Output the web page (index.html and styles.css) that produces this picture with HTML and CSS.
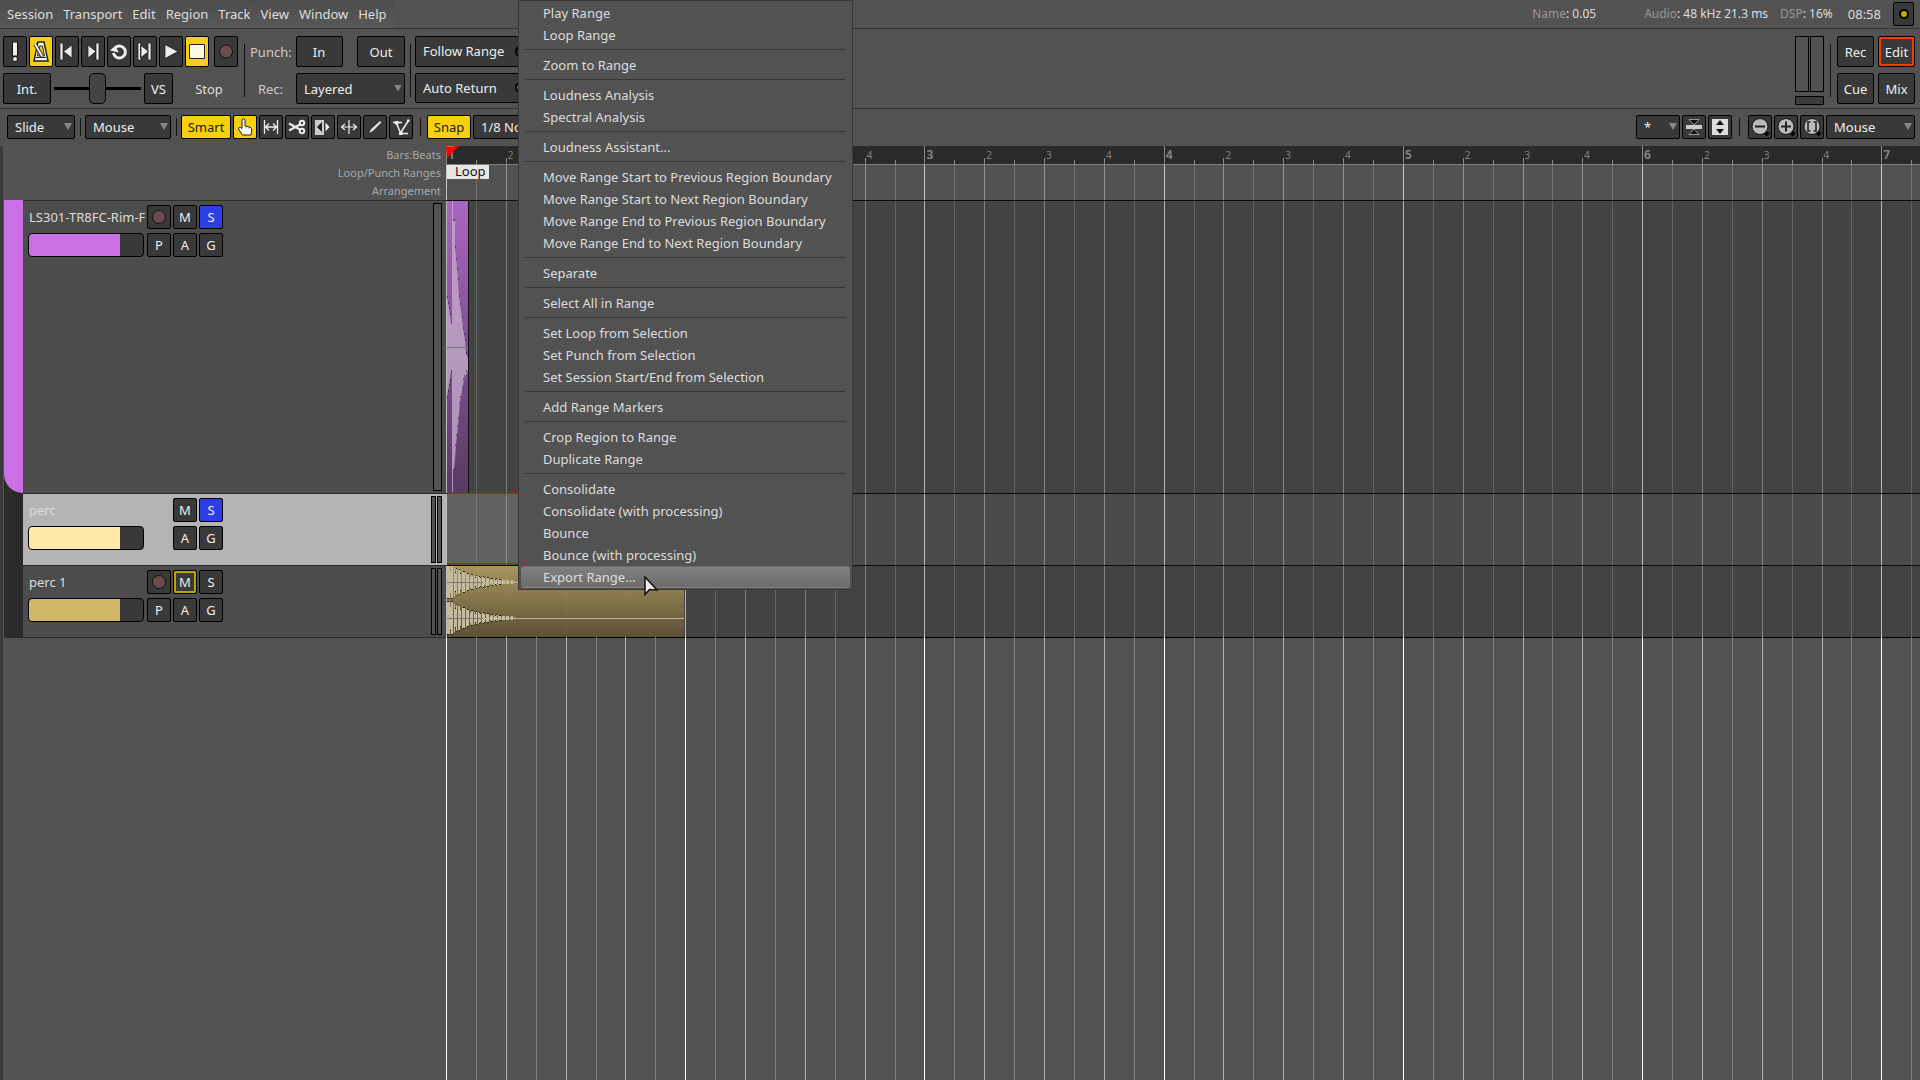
FILE: index.html
```html
<!DOCTYPE html>
<html lang="en">
<head>
  <meta charset="UTF-8" />
  <meta name="viewport" content="width=device-width, initial-scale=1.0"/>
  <title>Editor</title>
  <link rel="stylesheet" href="styles.css">
</head>
<body>
  <header class="menubar">
    <nav>
      <a href="#">Session</a>
      <a href="#">Transport</a>
      <a href="#">Edit</a>
      <a href="#">Region</a>
      <a href="#">Track</a>
      <a href="#">View</a>
      <a href="#">Window</a>
      <a href="#">Help</a>
    </nav>
    <div class="status">
      <span class="st-name"><i>Name</i>: 0.05</span>
      <span class="st-audio"><i>Audio</i>: 48 kHz 21.3 ms</span>
      <span class="st-dsp"><i>DSP</i>: 16%</span>
      <span class="st-time">08:58</span>
      <button class="btn log" aria-label="Log"><span></span></button>
    </div>
  </header>

  <!-- Transport -->
  <section class="transport">
    <div class="rows">
      <div class="row">
        <button class="btn icon" aria-label="Panic"><svg width="22" height="29"><path d="M8.500 5h5v14h-5z" fill="#eee" stroke="#111"/><circle cx="11" cy="22" r="2.500" fill="#eee" stroke="#111"/></svg></button>
        <button class="btn icon on" aria-label="Metronome"><svg width="22" height="29"><path d="M8 5h6l4 19H4z" fill="#fff" stroke="#222" stroke-width="1.500"/><path d="M9.500 9h3l2 10h-7z" fill="#f5d00f" stroke="#222"/><path d="M5 7l7 12" stroke="#222" stroke-width="3.500"/><path d="M5 7l7 12" stroke="#fff" stroke-width="1.800"/><path d="M6 20.500h10" stroke="#222"/></svg></button>
        <button class="btn icon" aria-label="Go to start"><svg width="22" height="29"><path d="M4 6h3v17H4z M16 8v13l-8.500-6.500z" fill="#eee" stroke="#111" stroke-width=".7"/></svg></button>
        <button class="btn icon" aria-label="Go to end"><svg width="22" height="29"><path d="M14 6h3v17h-3z M6 8v13l8-6.500z" fill="#eee" stroke="#111" stroke-width=".7"/></svg></button>
        <button class="btn icon" aria-label="Loop"><svg width="22" height="29"><path d="M7.500 10.500A6 6 0 1 1 5.500 16" fill="none" stroke="#eee" stroke-width="3"/><path d="M2 13.500l5-4.500 4 6.500z" fill="#eee"/></svg></button>
        <button class="btn icon" aria-label="Play selection"><svg width="22" height="29"><path d="M4 6h3v17H4zM14 6h3v17h-3z M6.500 8v13l8-6.500z" fill="#eee" stroke="#111" stroke-width=".7"/></svg></button>
        <button class="btn icon" aria-label="Play"><svg width="22" height="29"><path d="M5 7.500v14l13-7z" fill="#eee" stroke="#111" stroke-width=".7"/></svg></button>
        <button class="btn icon on" aria-label="Stop"><svg width="22" height="29"><path d="M3.500 7.500h15v14h-15z" fill="#fdf9e0" stroke="#222"/></svg></button>
        <button class="btn icon rec-main" aria-label="Record"><svg width="22" height="29"><circle cx="11" cy="14.500" r="6.500" fill="#6a4c4e" stroke="#111"/></svg></button>
      </div>
      <div class="row">
        <button class="btn int">Int.</button>
        <input class="shuttle" type="range" aria-label="Shuttle speed" min="0" max="100" value="50">
        <button class="btn vs">VS</button>
        <span class="state">Stop</span>
      </div>
    </div>
    <div class="vsep"></div>
    <div class="rows punch">
      <div class="row"><span class="lbl">Punch:</span><button class="btn in">In</button><button class="btn out">Out</button></div>
      <div class="row"><label class="lbl" for="recmode">Rec:</label><span class="combo layered"><select id="recmode"><option>Layered</option></select></span></div>
    </div>
    <div class="vsep"></div>
    <div class="rows follow">
      <button class="btn led">Follow Range<span></span></button>
      <button class="btn led lit">Auto Return<span></span></button>
    </div>
    <div class="meters">
      <div class="pair"><span></span><span></span></div>
      <span class="peak"></span>
    </div>
    <div class="vsep"></div>
    <div class="rows pages">
      <div class="row"><button class="btn">Rec</button><button class="btn current">Edit</button></div>
      <div class="row"><button class="btn">Cue</button><button class="btn">Mix</button></div>
    </div>
  </section>

  <!-- Edit tools -->
  <section class="tools">
    <span class="combo slide"><select aria-label="Edit mode"><option>Slide</option></select></span>
    <div class="vsep"></div>
    <span class="combo mouse"><select aria-label="Edit point"><option>Mouse</option></select></span>
    <div class="vsep"></div>
    <div class="group">
      <button class="btn smart on">Smart</button>
      <button class="btn icon on" aria-label="Grab"><svg width="22" height="22"><path d="M8 3.500q1.500-1.500 3 0V10l5 1.200q2 .6 1.700 3L17 19H8.500L4.500 13q0-2 2-1.500l1.500 1z" fill="#fff" stroke="#222"/><path d="M12 10.500v2M14.500 11v2" stroke="#888" stroke-width=".7"/></svg></button>
      <button class="btn icon" aria-label="Range"><svg width="22" height="22" fill="none" stroke="#eee" stroke-width="1.300"><path d="M4.500 4v14M17.500 4v14M5 11h12M9 7.500L5.500 11 9 14.500M13 7.500l3.500 3.500-3.500 3.500"/></svg></button>
      <button class="btn icon" aria-label="Cut"><svg width="22" height="22" fill="none" stroke="#eee" stroke-width="2"><path d="M3 7.500l11 6M3 14.500l11-6"/><circle cx="16" cy="7" r="2.200"/><circle cx="16" cy="15" r="2.200"/></svg></button>
      <button class="btn icon" aria-label="Audition"><svg width="22" height="22"><path d="M3 4h9v15H3z" fill="#ccc"/><path d="M5 11l5-5v10z" fill="#222"/><path d="M13.500 6.500l4 4.500-4 4.500z" fill="#eee"/></svg></button>
      <button class="btn icon" aria-label="Stretch"><svg width="22" height="22" fill="none" stroke="#eee" stroke-width="1.200"><path d="M11 4v14M3.500 11h15M7 8l-3.500 3L7 14M15 8l3.500 3-3.500 3"/></svg></button>
      <button class="btn icon" aria-label="Draw"><svg width="22" height="22"><path d="M4 18l2.500-5L16 4.500 18.500 6 9 15.500z" fill="#ddd" stroke="#111" stroke-width=".8"/></svg></button>
      <button class="btn icon" aria-label="Edit contents"><svg width="22" height="22" fill="none" stroke="#eee" stroke-width="1.500"><path d="M3 6.500h9M6.500 7l4 10 8-12.500M11 17.500h7"/><path d="M5 5h3.500v3.500H5zM9 15.500h3.500V19H9zM17 3.500h2.500V6H17z" fill="#eee" stroke="none"/></svg></button>
    </div>
    <div class="vsep"></div>
    <div class="group">
      <button class="btn snap on">Snap</button>
      <span class="combo note"><select aria-label="Grid"><option>1/8 Note</option></select></span>
    </div>
    <div class="group right">
      <span class="combo star"><select aria-label="Visible tracks"><option>*</option></select></span>
      <button class="btn icon" aria-label="Shrink tracks"><svg width="22" height="22"><path d="M3 9h16v4H3z" fill="#ccc"/><path d="M6 3.500h10L11 9zM6 18.500h10L11 13z" fill="#111" stroke="#bbb" stroke-width=".8"/></svg></button>
      <button class="btn icon" aria-label="Expand tracks"><svg width="22" height="22"><path d="M3 3h16v16H3z" fill="#ddd"/><path d="M11 4l4 5H7zM11 18l4-5H7z" fill="#111"/></svg></button>
    </div>
    <div class="vsep"></div>
    <div class="group">
      <button class="btn icon" aria-label="Zoom out"><svg width="22" height="22"><path d="M15 15l4 4" stroke="#000" stroke-width="4"/><circle cx="11" cy="10.500" r="8" fill="#bbb" stroke="#111"/><path d="M6 10.500h10" stroke="#222" stroke-width="2"/></svg></button>
      <button class="btn icon" aria-label="Zoom in"><svg width="22" height="22"><path d="M15 15l4 4" stroke="#000" stroke-width="4"/><circle cx="11" cy="10.500" r="8" fill="#bbb" stroke="#111"/><path d="M6 10.500h10M11 5.500v10" stroke="#222" stroke-width="2"/></svg></button>
      <button class="btn icon" aria-label="Zoom to session"><svg width="22" height="22"><path d="M15 15l4 4" stroke="#000" stroke-width="4"/><circle cx="11" cy="10.500" r="8" fill="#bbb" stroke="#111"/><path d="M9.500 6h-2.500v9h2.500M12.500 6h2.500v9h-2.500" fill="none" stroke="#222" stroke-width="1.600"/></svg></button>
      <span class="combo focus"><select aria-label="Zoom focus"><option>Mouse</option></select></span>
    </div>
  </section>

  <main class="editor">
    <div class="side">
      <div class="ruler-names"><span>Bars:Beats</span><span>Loop/Punch Ranges</span><span>Arrangement</span></div>
      <div class="lanes">
        <div class="groups"><span></span></div>
        <div class="heads">
          <div class="head tall">
            <div class="controls">
              <span class="name">LS301-TR8FC-Rim-F</span>
              <button class="btn icon" aria-label="Record"><svg width="22" height="22"><circle cx="11" cy="11" r="6.500" fill="#6a4c4e" stroke="#111"/></svg></button>
              <button class="btn">M</button><button class="btn solo">S</button>
              <input class="fader purple" type="range" aria-label="Gain" value="79">
              <button class="btn">P</button><button class="btn">A</button><button class="btn">G</button>
            </div>
            <div class="vu"><span class="wide"></span></div>
          </div>
          <div class="head selected">
            <div class="controls">
              <span class="name">perc</span>
              <span></span>
              <button class="btn">M</button><button class="btn solo">S</button>
              <input class="fader cream" type="range" aria-label="Gain" value="79">
              <span></span>
              <button class="btn">A</button><button class="btn">G</button>
            </div>
            <div class="vu"><span></span><span></span></div>
          </div>
          <div class="head">
            <div class="controls">
              <span class="name">perc 1</span>
              <button class="btn icon" aria-label="Record"><svg width="22" height="22"><circle cx="11" cy="11" r="6.500" fill="#6a4c4e" stroke="#111"/></svg></button>
              <button class="btn muted">M</button><button class="btn">S</button>
              <input class="fader gold" type="range" aria-label="Gain" value="79">
              <button class="btn">P</button><button class="btn">A</button><button class="btn">G</button>
            </div>
            <div class="vu"><span></span><span></span></div>
          </div>
        </div>
      </div>
    </div>

    <div class="canvas">
      <div class="grid" id="grid"></div>
      <div class="ruler" id="ruler"></div>
      <div class="marks"><span class="loop">Loop</span></div>
      <div class="track tall">
        <svg class="region rim" width="22" height="292" viewBox="0 0 22 292">
          <defs><linearGradient id="rim" x1="0" y1="0" x2="0" y2="1"><stop offset="0" stop-color="#a966c0"/><stop offset="1" stop-color="#5a3965"/></linearGradient></defs>
          <path d="M0 0h21v292H0z" fill="url(#rim)"/>
          <path d="M0 96L2 107 4 122H5V0H6V19H8V46L10 68 12 95 14 110 16 127 18 139 19 152 21 158V170L19 174 17 178 15 190 13 202 11 225 9 244 8 258 7 268H6V291H5V170H4L2 184 0 196z" fill="#c4aacb" opacity=".8"/>
          <path d="M0 96h1M1 102h1M2 107h1M3 113h1M4 122h1M6 19h2M8 46h1M9 58h1M10 68h1M11 78h1M12 95h1M13 103h1M15 116h1M16 127h1M17 133h1M18 139h1M19 152h1M19 170h1M17 175h1M16 178h1M15 186h1M13 196h1M12 202h1M11 217h1M10 225h1M9 234h1M8 244h1M7 268h1M4 170h1M3 179h1M2 184h1M1 190h1M0 196h1" stroke="#111"/>
          <path d="M0 146.500h21" stroke="#777"/>
          <path d="M21.500 0v292" stroke="#111"/>
        </svg>
      </div>
      <div class="track bus"><div class="selection"></div></div>
      <div class="track"><svg class="region perc" id="perc"></svg></div>
      <div class="rest"></div>
      <svg class="playhead" width="13" height="48"><path d="M0 0h13L1 12z" fill="#f00"/><path d="M0 0h8v1H0z" fill="#f50"/></svg>
    </div>
  </main>

  <!-- Range context menu -->
  <div class="popup" role="menu" id="popup"></div>

  <svg class="pointer" width="15" height="21"><path d="M1 1v17.500l4.500-5 7.500.5z" fill="#eee" stroke="#111" stroke-width="1.500"/></svg>

  <script>
    const menu = [
      ["Play Range", "Loop Range"],
      ["Zoom to Range"],
      ["Loudness Analysis", "Spectral Analysis"],
      ["Loudness Assistant..."],
      ["Move Range Start to Previous Region Boundary", "Move Range Start to Next Region Boundary",
       "Move Range End to Previous Region Boundary", "Move Range End to Next Region Boundary"],
      ["Separate"],
      ["Select All in Range"],
      ["Set Loop from Selection", "Set Punch from Selection", "Set Session Start/End from Selection"],
      ["Add Range Markers"],
      ["Crop Region to Range", "Duplicate Range"],
      ["Consolidate", "Consolidate (with processing)", "Bounce", "Bounce (with processing)", "Export Range..."]
    ];
    document.getElementById('popup').innerHTML = menu.map(group =>
      group.map(t => `<button role="menuitem"${t === "Export Range..." ? ' class="hover"' : ''}>${t}</button>`).join('')
    ).join('<hr>');

    // Bars and beats, once for the ruler and once for the grid behind the tracks
    const lastBar = 7;
    let ruler = '', grid = '';
    for (let bar = 1; bar <= lastBar; bar++) {
      ruler += '<div class="bar">';
      grid += '<div class="bar">';
      for (let beat = 1; beat <= 4; beat++) {
        const label = beat === 1 ? bar : (bar < lastBar ? beat : '');
        ruler += `<div class="beat"><span>${label}</span><i></i></div>`;
        grid += '<div class="beat"><i></i></div>';
      }
      ruler += '</div>';
      grid += '</div>';
    }
    document.getElementById('ruler').innerHTML = ruler;
    document.getElementById('grid').innerHTML = grid;

    // Stereo waveform, decaying over the first quarter of the region
    let wave = '';
    for (const mid of [16, 52]) {
      let body = '', dots = '';
      for (let x = 0; x < 68; x++) {
        const top = x < 7 ? 16 : 14 * Math.exp(-(x - 7) / 26);
        const h = Math.round(x % 5 === 3 ? top * 0.7 : top);
        if (x % 4 !== 2 || x < 6) body += `M${x}.5 ${mid - h}v${2 * h}`;
        if (x % 4 < 2 && x < 54) dots += `M${x} ${mid - h - 0.5}h1M${x} ${mid + h + 0.5}h1`;
      }
      wave += `<path d="M0 ${mid}.5h9999" stroke="#c3b88f"/>`;
      wave += `<path d="${body}" stroke="#c4ba9c"/><path d="${dots}" stroke="#1a1810"/>`;
      wave += `<path d="M0 ${mid}.5h36" stroke="#777"/>`;
    }
    document.getElementById('perc').innerHTML = wave;
  </script>
</body>
</html>
```
FILE: styles.css
```css
* { box-sizing: border-box; margin: 0; padding: 0; }
body {
  height: 100vh; overflow: hidden; display: flex; flex-direction: column;
  font-family: "Noto Sans", sans-serif; font-size: 13px; line-height: 18px;
  background: #525252; color: #ddd;
}
button, select, input { font: inherit; color: inherit; }
button { cursor: pointer; }
svg { display: block; }
i { font-style: normal; }

/* Menu bar */
.menubar { display: flex; justify-content: space-between; height: 29px; border-bottom: 1px solid #333; }
.menubar nav { display: flex; align-items: center; gap: 10px; padding: 0 7px; background: linear-gradient(#4c4c4c, #585858); }
.menubar nav a { color: #ddd; text-decoration: none; }
.status { display: flex; align-items: center; padding: 0 6px 0 0; font-size: 12px; }
.status i { color: #999; }
.st-name { margin-right: 48px; }
.st-audio { margin-right: 12px; }
.st-dsp { margin-right: 15px; }
.st-time { margin-right: 12px; font-size: 13px; }
.log { width: 21px; height: 24px; display: flex; align-items: center; justify-content: center; }
.log span { width: 10px; height: 10px; border: 2px solid #000; border-radius: 50%; background: #d0a800; }

/* Controls */
.btn {
  background: #393939; border: 1px solid #000; border-radius: 2px; color: #eee;
  text-align: center; white-space: nowrap;
}
.btn.on { background: #f5d00f; color: #222; }
.btn.icon { width: 24px; }
.combo { position: relative; display: block; }
.combo select {
  appearance: none; width: 100%; height: 100%; padding: 0 7px; background: #393939;
  border: 1px solid #000; border-radius: 2px; color: #eee;
}
.combo::after {
  content: ""; position: absolute; right: 3px; top: 50%; width: 8px; height: 7px; margin-top: -4px;
  background: #888; clip-path: polygon(0 0, 100% 0, 50% 100%);
}
.vsep { width: 1px; background: #111; }

/* Transport */
.transport { display: flex; height: 80px; padding: 7px 5px 5px 3px; border-bottom: 1px solid #333; }
.transport .vsep { height: 53px; margin-top: 8px; }
.rows { display: flex; flex-direction: column; gap: 6px; }
.row { display: flex; gap: 2px; align-items: center; }
.rows .btn, .rows .combo { height: 31px; }
.rec-main { margin-left: 3px; }
.rows .int { width: 48px; }
.rows .vs { width: 29px; }
.state { width: 68px; text-align: center; }
.shuttle { appearance: none; width: 87px; height: 31px; margin: 0 1px; background: linear-gradient(#000, #000) center / 100% 3px no-repeat; }
.shuttle::-webkit-slider-thumb { appearance: none; width: 17px; height: 31px; background: #444; border: 1px solid #000; border-radius: 5px; }
.transport .rows:first-child { width: 241px; }
.punch { padding: 0 5px; width: 165px; }
.punch .row { justify-content: space-between; gap: 0; }
.lbl { width: 41px; text-align: center; color: #ccc; }
.in { width: 47px; }
.out { width: 48px; margin-left: 10px; }
.layered { width: 109px; }
.follow { padding-left: 4px; width: 122px; }
.led { display: flex; align-items: center; justify-content: space-between; padding: 0 6px 0 7px; }
.led span { width: 11px; height: 11px; border: 2px solid #000; border-radius: 50%; background: #622; }
.led.lit span { background: #f50; }
.meters { margin-left: auto; margin-right: 6px; width: 29px; }
.pair { display: flex; gap: 1px; height: 56px; margin-bottom: 4px; }
.pair span { flex: 1; border: 1px solid #000; }
.peak { display: block; height: 9px; border: 1px solid #000; background: #3c3c3c; border-radius: 1px; }
.pages { padding-left: 6px; }
.pages .row { gap: 4px; }
.pages .btn { width: 37px; }
.pages .current { box-shadow: inset 0 0 0 2px #f43d00; }

/* Tools */
.tools { display: flex; padding: 6px 5px 7px 7px; }
.tools .btn, .tools .combo { height: 24px; }
.tools .vsep { height: 18px; margin: 3px 4px 0 5px; }
.group { display: flex; gap: 2px; }
.group.right { margin-left: auto; }
.slide { width: 68px; }
.mouse { width: 86px; }
.smart { width: 50px; }
.snap { width: 44px; }
.note { width: 90px; }
.star { width: 44px; }
.focus { width: 89px; }
.tools .group + .vsep { margin: 3px 6px 0 7px; }
.tools .right + .vsep { margin-right: 8px; }

/* Editor */
.editor { flex: 1; display: flex; min-height: 0; }
.side { width: 446px; display: flex; flex-direction: column; border-left: 3px solid #3a3a3a; }
.ruler-names { height: 54px; padding-right: 5px; display: flex; flex-direction: column; text-align: right; font-size: 11px; color: #a8a8a8; }
.lanes { display: flex; padding-left: 1px; }
.groups { width: 19px; background: #2a2a2a; }
.groups span { display: block; height: 293px; background: #ca70e4; border-radius: 0 0 0 19px; }
.heads { flex: 1; border-bottom: 1px solid #2c2c2c; }
.head { height: 72px; display: flex; justify-content: space-between; padding: 4px 4px 2px 5px; border-top: 1px solid #2c2c2c; background: #4c4c4c; }
.head.tall { height: 293px; }
.head.selected { background: #b4b4b4; }
.controls { display: grid; grid-template-columns: 117px 24px 24px 24px; grid-auto-rows: 24px; gap: 4px 2px; }
.name { padding-left: 1px; line-height: 24px; white-space: nowrap; overflow: hidden; }
.selected .name { color: #ddd; }
.solo { background: #2e3ee6; }
.muted { box-shadow: inset 0 0 0 2px #b8a500; }
.fader { appearance: none; width: 116px; height: 24px; border: 1px solid #000; border-radius: 4px; }
.fader::-webkit-slider-thumb { appearance: none; width: 1px; height: 22px; background: transparent; }
.purple { background: linear-gradient(90deg, #ca70e4 80%, #393939 80%); }
.cream { background: linear-gradient(90deg, #ffe8a8 80%, #393939 80%); }
.gold { background: linear-gradient(90deg, #d3b869 80%, #393939 80%); }
.vu { display: flex; gap: 1px; margin-top: -2px; }
.vu span { width: 5px; border: 1px solid #000; background: #525252; }
.vu .wide { width: 9px; }

/* Timeline */
.canvas { position: relative; flex: 1; min-width: 0; overflow: hidden; display: flex; flex-direction: column; }
.bar { flex: 0 0 16.23%; display: flex; }
.beat { flex: 1; min-width: 0; display: flex; }
.ruler { position: relative; flex: none; display: flex; height: 19px; background: #2a2a2a; border-bottom: 1px solid #808080; overflow: hidden; }
.ruler .beat { position: relative; background: linear-gradient(#888, #888) left bottom / 1px 6px no-repeat; padding-left: 2px; font-size: 10px; color: #808080; }
.ruler .beat:first-child { background-size: 1px 100%; font-size: 12px; font-weight: bold; }
.ruler i { position: absolute; left: 50%; bottom: 0; width: 1px; height: 4px; background: #888; }
.grid { position: absolute; inset: 18px 0 0 0; display: flex; overflow: hidden; }
.grid .beat { border-left: 1px solid #b0b0b0; justify-content: center; }
.grid .beat:first-child { border-color: #fff; }
.grid i { width: 1px; background: #808080; }
.marks { position: relative; height: 35px; background: rgba(82, 82, 82, .32); }
.loop { display: block; width: 42px; height: 14px; padding-left: 8px; margin-left: 1px; background: #e6e6e6; color: #111; line-height: 13px; }
.track { position: relative; height: 72px; border-top: 1px solid #0a0a0a; background: rgba(36, 36, 36, .32); }
.track.tall { height: 293px; }
.track.bus { background: rgba(60, 60, 60, .32); }
.region { margin-left: 1px; }
.perc { width: 16.1%; height: 71px; background: linear-gradient(rgba(176, 157, 96, .92), rgba(93, 81, 52, .92)); }
.selection { position: absolute; left: 1px; top: -1px; width: 16.1%; height: 71px; background: rgba(140, 140, 140, .35); border: 1px solid #d81010; border-width: 1px 0; background-clip: padding-box; }
.rest { border-top: 1px solid #000; }
.playhead { position: absolute; left: 0; top: 0; }

/* Popup */
.popup {
  position: absolute; left: 518px; top: 0; width: 335px; padding: 1px 2px; background: #525252;
  border: 1px solid #383838; display: flex; flex-direction: column;
}
.popup button { height: 22px; padding: 0 21px; text-align: left; background: none; border: 1px solid transparent; border-radius: 3px; color: #ddd; white-space: nowrap; }
.popup .hover { background: linear-gradient(#808080, #6c6c6c); }
.popup hr { margin: 3px 4px 4px; border: 0; border-top: 1px solid #383838; }
.pointer { position: absolute; left: 644px; top: 576px; }
```
